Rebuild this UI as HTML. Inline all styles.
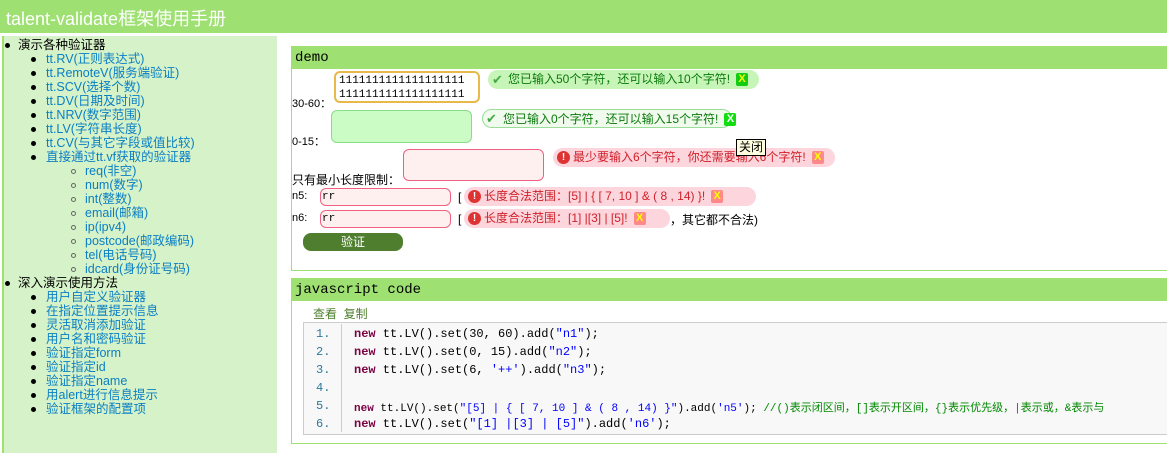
<!DOCTYPE html><html><head><meta charset="utf-8"><style>
*{margin:0;padding:0;box-sizing:border-box}
body{width:1167px;height:453px;overflow:hidden;background:#fff;font-family:"Liberation Sans","Noto Sans CJK SC",sans-serif;font-size:12px;position:relative}
.a{position:absolute;white-space:nowrap}
#hd{left:0;top:0;width:1167px;height:33px;background:#9ee072;color:#fff;font-size:18px;padding:5px 0 0 6px}
#sb{left:2px;top:36px;width:275px;height:417px;background:#d6f2c8;border-left:2px solid #9ee072}
.l{position:absolute;font-size:12.5px;line-height:14px;color:#0a7fc4;white-space:nowrap}
.l.b{color:#000}
.d{position:absolute;width:5px;height:5px;border-radius:50%;background:#000}
.c{position:absolute;width:5px;height:5px;border-radius:50%;border:1px solid #666}
.pn{border:1px solid #9ee072}
.ph{background:#9ee072;font-family:"Liberation Mono",monospace;font-size:14px;color:#000;padding:3px 0 0 3px}
.ta{position:absolute;border-radius:6px}
.tip{position:absolute;height:19px;border-radius:10px;font-size:12px;line-height:19px;padding-left:20px;white-space:nowrap}
.ok{background:#c7f5b8;color:#0a7a0a}
.er{background:#fcd6dc;color:#d0202a}
.x{display:inline-block;width:12px;height:13px;line-height:13px;text-align:center;font-weight:bold;color:#ff0;font-size:11px;border-radius:2px;margin-left:6px;vertical-align:middle}
.ic{position:absolute;left:4px;top:3px;width:13px;height:13px;border-radius:50%;background:#d33;color:#fff;font-size:10px;line-height:13px;text-align:center;font-weight:bold}
.code{font-family:"Liberation Mono","Noto Sans CJK SC",monospace;font-size:12px}
.n{color:#2a7a9a}
.k{color:#7a0040;font-weight:bold}.s{color:#00f}.cm{color:#080}
</style></head><body>
<div class="a" id="hd">talent-validate框架使用手册</div>
<div class="a" id="sb"></div>
<div id="menu">
<div class="d" style="left:5px;top:43px"></div><div class="l b" style="left:18px;top:38px">演示各种验证器</div>
<div class="d" style="left:31px;top:57px"></div><div class="l" style="left:46px;top:52px">tt.RV(正则表达式)</div>
<div class="d" style="left:31px;top:71px"></div><div class="l" style="left:46px;top:66px">tt.RemoteV(服务端验证)</div>
<div class="d" style="left:31px;top:85px"></div><div class="l" style="left:46px;top:80px">tt.SCV(选择个数)</div>
<div class="d" style="left:31px;top:99px"></div><div class="l" style="left:46px;top:94px">tt.DV(日期及时间)</div>
<div class="d" style="left:31px;top:113px"></div><div class="l" style="left:46px;top:108px">tt.NRV(数字范围)</div>
<div class="d" style="left:31px;top:127px"></div><div class="l" style="left:46px;top:122px">tt.LV(字符串长度)</div>
<div class="d" style="left:31px;top:141px"></div><div class="l" style="left:46px;top:136px">tt.CV(与其它字段或值比较)</div>
<div class="d" style="left:31px;top:155px"></div><div class="l" style="left:46px;top:150px">直接通过tt.vf获取的验证器</div>
<div class="c" style="left:71px;top:169px"></div><div class="l" style="left:85px;top:164px">req(非空)</div>
<div class="c" style="left:71px;top:183px"></div><div class="l" style="left:85px;top:178px">num(数字)</div>
<div class="c" style="left:71px;top:197px"></div><div class="l" style="left:85px;top:192px">int(整数)</div>
<div class="c" style="left:71px;top:211px"></div><div class="l" style="left:85px;top:206px">email(邮箱)</div>
<div class="c" style="left:71px;top:225px"></div><div class="l" style="left:85px;top:220px">ip(ipv4)</div>
<div class="c" style="left:71px;top:239px"></div><div class="l" style="left:85px;top:234px">postcode(邮政编码)</div>
<div class="c" style="left:71px;top:253px"></div><div class="l" style="left:85px;top:248px">tel(电话号码)</div>
<div class="c" style="left:71px;top:267px"></div><div class="l" style="left:85px;top:262px">idcard(身份证号码)</div>
<div class="d" style="left:5px;top:281px"></div><div class="l b" style="left:18px;top:276px">深入演示使用方法</div>
<div class="d" style="left:31px;top:295px"></div><div class="l" style="left:46px;top:290px">用户自定义验证器</div>
<div class="d" style="left:31px;top:309px"></div><div class="l" style="left:46px;top:304px">在指定位置提示信息</div>
<div class="d" style="left:31px;top:323px"></div><div class="l" style="left:46px;top:318px">灵活取消添加验证</div>
<div class="d" style="left:31px;top:337px"></div><div class="l" style="left:46px;top:332px">用户名和密码验证</div>
<div class="d" style="left:31px;top:351px"></div><div class="l" style="left:46px;top:346px">验证指定form</div>
<div class="d" style="left:31px;top:365px"></div><div class="l" style="left:46px;top:360px">验证指定id</div>
<div class="d" style="left:31px;top:379px"></div><div class="l" style="left:46px;top:374px">验证指定name</div>
<div class="d" style="left:31px;top:393px"></div><div class="l" style="left:46px;top:388px">用alert进行信息提示</div>
<div class="d" style="left:31px;top:407px"></div><div class="l" style="left:46px;top:402px">验证框架的配置项</div>
</div>

<div class="a pn" style="left:291px;top:46px;width:880px;height:225px"></div>
<div class="a ph" style="left:292px;top:47px;width:880px;height:22px">demo</div>
<div class="a" style="left:292px;top:95px;font-size:11px">30-60：</div>
<div class="ta" style="left:334px;top:71px;width:146px;height:32px;border:2px solid #e8b84a;background:#fff;font-family:'Liberation Mono',monospace;font-size:11px;line-height:14px;padding:1px 3px;overflow:hidden">1111111111111111111<br>1111111111111111111</div>
<div class="tip ok" style="left:488px;top:70px;width:271px">您已输入50个字符，还可以输入10个字符!<span class="x" style="background:#1c1">X</span></div>
<div class="a" style="left:492px;top:72px;color:#4a4;font-size:13px">✔</div>
<div class="a" style="left:292px;top:133px;font-size:11px">0-15：</div>
<div class="ta" style="left:331px;top:110px;width:141px;height:33px;border:1px solid #8d8;background:#ccfcc6"></div>
<div class="tip ok" style="left:482px;top:109px;width:250px;background:#f0fbee;border:1px solid #9d9">您已输入0个字符，还可以输入15个字符!<span class="x" style="background:#1d1;color:#fff">X</span></div>
<div class="a" style="left:486px;top:111px;color:#4a4;font-size:13px">✔</div>
<div class="a" style="left:292px;top:171px">只有最小长度限制：</div>
<div class="ta" style="left:403px;top:149px;width:141px;height:32px;border:1px solid #f06080;background:#fff0f0"></div>
<div class="tip er" style="left:553px;top:148px;width:282px">最少要输入6个字符，你还需要输入6个字符!<span class="x" style="background:#f88">X</span><div class="ic">!</div></div>
<div class="a" style="left:736px;top:139px;background:#ffffe0;border:1px solid #000;font-size:12px;padding:0 2px;line-height:15px">关闭</div>
<div class="a" style="left:292px;top:190px;font-size:11px">n5:</div>
<div class="ta" style="left:320px;top:188px;width:131px;height:18px;border:1px solid #f06080;background:#fff0f0;font-family:'Liberation Mono',monospace;font-size:11px;padding-left:1px;line-height:16px">rr</div>
<div class="a" style="left:458px;top:190px">[</div>
<div class="tip er" style="left:464px;top:187px;width:292px">长度合法范围：[5] | { [ 7, 10 ] &amp; ( 8 , 14) }!<span class="x" style="background:#f88">X</span><div class="ic">!</div></div>
<div class="a" style="left:292px;top:212px;font-size:11px">n6:</div>
<div class="ta" style="left:320px;top:210px;width:131px;height:18px;border:1px solid #f06080;background:#fff0f0;font-family:'Liberation Mono',monospace;font-size:11px;padding-left:1px;line-height:16px">rr</div>
<div class="a" style="left:458px;top:212px">[</div>
<div class="tip er" style="left:464px;top:209px;width:206px">长度合法范围：[1] |[3] | [5]!<span class="x" style="background:#f88">X</span><div class="ic">!</div></div>
<div class="a" style="left:670px;top:211px">，其它都不合法)</div>
<div class="a" style="left:303px;top:233px;width:100px;height:18px;border-radius:8px;background:#4e7e2e;color:#fff;text-align:center;line-height:18px">验证</div>

<div class="a pn" style="left:291px;top:278px;width:880px;height:166px"></div>
<div class="a ph" style="left:292px;top:279px;width:880px;height:22px">javascript code</div>
<div class="a" style="left:313px;top:305px;color:#4e7e2e">查看&nbsp; 复制</div>
<div class="a code" style="left:303px;top:322px;width:868px;height:113px;background:#f8f8f8;border:1px solid #ccc"></div>
<div class="a" style="left:341px;top:324px;width:1px;height:108px;background:#ccc"></div>
<div class="code">
<div class="a n" style="left:316px;top:327px">1.</div><div class="a" style="left:354px;top:327px"><span class="k">new</span> tt.LV().set(30, 60).add(<span class="s">"n1"</span>);</div>
<div class="a n" style="left:316px;top:345px">2.</div><div class="a" style="left:354px;top:345px"><span class="k">new</span> tt.LV().set(0, 15).add(<span class="s">"n2"</span>);</div>
<div class="a n" style="left:316px;top:363px">3.</div><div class="a" style="left:354px;top:363px"><span class="k">new</span> tt.LV().set(6, <span class="s">'++'</span>).add(<span class="s">"n3"</span>);</div>
<div class="a n" style="left:316px;top:381px">4.</div>
<div class="a n" style="left:316px;top:399px">5.</div><div class="a" style="left:354px;top:399px;font-size:11px"><span class="k">new</span> tt.LV().set(<span class="s">"[5] | { [ 7, 10 ] &amp; ( 8 , 14) }"</span>).add(<span class="s">'n5'</span>); <span class="cm">//()表示闭区间，[]表示开区间，{}表示优先级，|表示或，&amp;表示与</span></div>
<div class="a n" style="left:316px;top:417px">6.</div><div class="a" style="left:354px;top:417px"><span class="k">new</span> tt.LV().set(<span class="s">"[1] |[3] | [5]"</span>).add(<span class="s">'n6'</span>);</div>
</div>
</body></html>
